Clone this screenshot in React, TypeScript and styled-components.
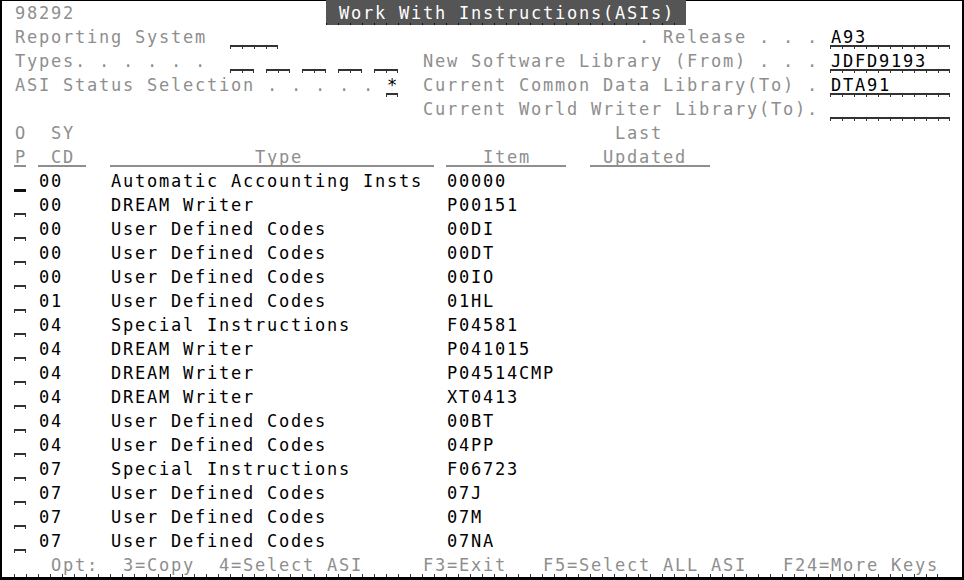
import React from "react";
import styled, { createGlobalStyle, css } from "styled-components";

const CELL = 12;
const FONT = 17;

const GlobalStyle = createGlobalStyle`
  html, body { margin: 0; padding: 0; background: #ffffff; }
  #root { width: 964px; height: 580px; }
`;

const Screen = styled.div`
  width: ${CELL * 80}px;
  height: ${24 * 24}px;
  border-style: solid;
  border-color: #000;
  border-width: 1px 2px 3px 2px;
  background: #fff;
  display: flex;
  flex-direction: column;
  font-family: "DejaVu Sans Mono", monospace;
  font-size: ${FONT}px;
  line-height: 24px;
`;

const Row = styled.div`
  height: 24px;
  display: grid;
  grid-template-columns: repeat(80, ${CELL}px);
  grid-template-rows: 24px;
`;

type Tone = "label" | "data" | "title";

const toneColor: Record<Tone, string> = {
  label: "#8e8e8e",
  data: "#000000",
  title: "#ffffff",
};

const Cell = styled.span<{ $col: number; $len: number; $tone: Tone }>`
  grid-column: ${(p) => p.$col + 1} / span ${(p) => p.$len};
  grid-row: 1;
  min-width: 0;
  white-space: pre;
  letter-spacing: ${CELL - 0.602 * FONT}px;
  padding-left: 1px;
  color: ${(p) => toneColor[p.$tone]};
`;

const Title = styled(Cell)`
  margin-top: -1px;
  padding-top: 1px;
  background:
    repeating-linear-gradient(to right, #111 0 1px, transparent 1px ${CELL}px) left 0 bottom 0 / 100% 2px no-repeat,
    #555555;
`;

const Head = styled(Cell)`
  background: linear-gradient(#8e8e8e, #8e8e8e) left 0 top 20px / 100% 2px no-repeat;
`;

const fieldLine = css`
  background:
    linear-gradient(#333, #333) left 0 top 20px / 100% 2px no-repeat,
    repeating-linear-gradient(to right, #333 0 1px, transparent 1px ${CELL}px) left 0 top 20px / 100% 4px no-repeat,
    linear-gradient(#333, #333) right 0 top 20px / 1px 4px no-repeat;
`;

const Field = styled(Cell)<{ $cursor?: boolean }>`
  ${(p) =>
    p.$cursor
      ? css`
          background: linear-gradient(#111, #111) left 0 top 20px / 100% 3px no-repeat;
        `
      : fieldLine}
`;

const FooterRule = styled.span<{ $col: number; $len: number }>`
  grid-column: ${(p) => p.$col + 1} / span ${(p) => p.$len};
  grid-row: 1;
  background:
    repeating-linear-gradient(to right, #333 0 1px, transparent 1px ${CELL}px) left 0 bottom 0 / 100% 3px no-repeat,
    linear-gradient(#333, #333) right 0 bottom 0 / 1px 3px no-repeat;
`;

const T = ({ col, text, tone = "label" }: { col: number; text: string; tone?: Tone }) => (
  <Cell $col={col} $len={text.length} $tone={tone}>
    {text}
  </Cell>
);

const F = ({ col, len, text = "", cursor }: { col: number; len: number; text?: string; cursor?: boolean }) => (
  <Field $col={col} $len={len} $tone="data" $cursor={cursor}>
    {text}
  </Field>
);

const H = ({ col, text }: { col: number; text: string }) => (
  <Head $col={col} $len={text.length} $tone="label">
    {text}
  </Head>
);

const records: [string, string, string][] = [
  ["00", "Automatic Accounting Insts", "00000"],
  ["00", "DREAM Writer", "P00151"],
  ["00", "User Defined Codes", "00DI"],
  ["00", "User Defined Codes", "00DT"],
  ["00", "User Defined Codes", "00IO"],
  ["01", "User Defined Codes", "01HL"],
  ["04", "Special Instructions", "F04581"],
  ["04", "DREAM Writer", "P041015"],
  ["04", "DREAM Writer", "P04514CMP"],
  ["04", "DREAM Writer", "XT0413"],
  ["04", "User Defined Codes", "00BT"],
  ["04", "User Defined Codes", "04PP"],
  ["07", "Special Instructions", "F06723"],
  ["07", "User Defined Codes", "07J"],
  ["07", "User Defined Codes", "07M"],
  ["07", "User Defined Codes", "07NA"],
];

const footerKeys: [number, string][] = [
  [4, "Opt:"],
  [10, "3=Copy"],
  [18, "4=Select ASI"],
  [35, "F3=Exit"],
  [45, "F5=Select ALL ASI"],
  [65, "F24=More Keys"],
];

export default function App() {
  return (
    <>
      <GlobalStyle />
      <Screen>
        <Row>
          <T col={1} text="98292" />
          <Title $col={27} $len={30} $tone="title">
            {" Work With Instructions(ASIs) "}
          </Title>
        </Row>
        <Row>
          <T col={1} text="Reporting System" />
          <F col={19} len={4} />
          <T col={53} text=". Release . . ." />
          <F col={69} len={10} text="A93" />
        </Row>
        <Row>
          <T col={1} text="Types. . . . . ." />
          {[19, 22, 25, 28, 31].map((c) => (
            <F key={c} col={c} len={2} />
          ))}
          <T col={35} text="New Software Library (From) . . ." />
          <F col={69} len={10} text="JDFD9193" />
        </Row>
        <Row>
          <T col={1} text="ASI Status Selection . . . . ." />
          <F col={32} len={1} text="*" />
          <T col={35} text="Current Common Data Library(To) ." />
          <F col={69} len={10} text="DTA91" />
        </Row>
        <Row>
          <T col={35} text="Current World Writer Library(To)." />
          <F col={69} len={10} />
        </Row>
        <Row>
          <T col={1} text="O" />
          <T col={4} text="SY" />
          <T col={51} text="Last" />
        </Row>
        <Row>
          <H col={1} text="P" />
          <H col={3} text=" CD " />
          <H col={9} text={"            Type           "} />
          <H col={37} text="   Item   " />
          <H col={49} text=" Updated  " />
        </Row>
        {records.map(([sy, type, item], i) => (
          <Row key={i}>
            <F col={1} len={1} cursor={i === 0} />
            <T col={3} text={sy} tone="data" />
            <T col={9} text={type} tone="data" />
            <T col={37} text={item} tone="data" />
          </Row>
        ))}
        <Row>
          <FooterRule $col={1} $len={77} />
          {footerKeys.map(([c, t]) => (
            <T key={c} col={c} text={t} />
          ))}
        </Row>
      </Screen>
    </>
  );
}
